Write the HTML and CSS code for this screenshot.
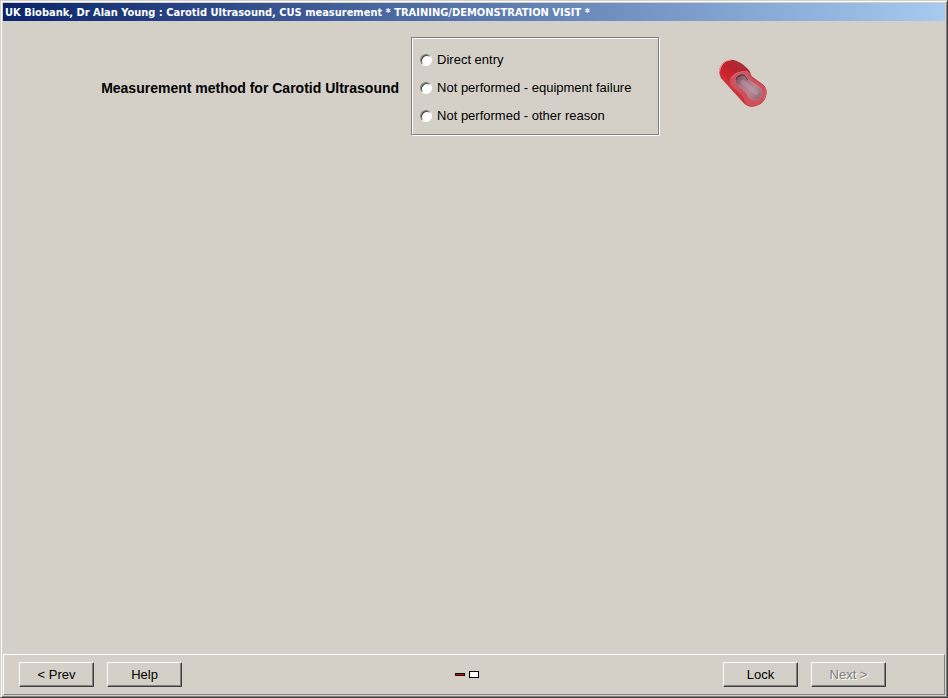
FILE: index.html
```html
<!DOCTYPE html>
<html lang="en">

<head>
    <meta charset="UTF-8">
    <meta name="viewport" content="width=device-width, initial-scale=1.0">
    <title>UK Biobank, Dr Alan Young : Carotid Ultrasound</title>
    <link rel="stylesheet" href="styles.css">
</head>

<body>
    <div class="window">
        <header class="title-bar">
            <h1>UK Biobank, Dr Alan Young : Carotid Ultrasound, CUS measurement * TRAINING/DEMONSTRATION VISIT *</h1>
        </header>

        <main class="content">
            <div class="question" id="question">Measurement method for Carotid Ultrasound</div>
            <div class="options" role="radiogroup" aria-labelledby="question">
                <label class="option"><input type="radio" name="method" value="direct">Direct entry</label>
                <label class="option"><input type="radio" name="method" value="equipment">Not performed - equipment failure</label>
                <label class="option"><input type="radio" name="method" value="other">Not performed - other reason</label>
            </div>
            <svg class="artery" width="50" height="50" viewBox="15 15 150 150" aria-hidden="true">
                <defs>
                    <linearGradient id="tube" x1="85" y1="28" x2="36" y2="85" gradientUnits="userSpaceOnUse">
                        <stop offset="0" stop-color="#a8303a"/>
                        <stop offset="0.4" stop-color="#b8242e"/>
                        <stop offset="0.75" stop-color="#cf222d"/>
                        <stop offset="1" stop-color="#cc343d"/>
                    </linearGradient>
                    <linearGradient id="lumen" x1="68" y1="65" x2="138" y2="132" gradientUnits="userSpaceOnUse">
                        <stop offset="0" stop-color="#75444f"/>
                        <stop offset="0.3" stop-color="#a37683"/>
                        <stop offset="0.65" stop-color="#b58a97"/>
                        <stop offset="1" stop-color="#946875"/>
                    </linearGradient>
                </defs>
                <!-- outer wall -->
                <path d="M16 56C14 36 30 17 52 17C70 17 92 32 107 51L113 67L148 92C157 100 160 112 156 126C151 147 130 159 110 158C100 157 94 153 86 144L20 71Z" fill="url(#tube)"/>
                <path d="M17 53C18 33 33 18 51 18" fill="none" stroke="#e6a9ab" stroke-width="3"/>
                <!-- cut face -->
                <path d="M48 76C52 60 78 48 101 53C109 56 109 63 113 69L148 94C160 105 160 122 150 139C139 154 116 160 103 154C90 147 91 134 84 124L58 102C50 94 46 86 48 76Z" fill="#cf505b"/>
                <path d="M54 72C62 57 83 50 101 54" fill="none" stroke="#df7b82" stroke-width="2"/>
                <path d="M149 97C159 107 157 121 149 136" fill="none" stroke="#dc727a" stroke-width="2"/>
                <!-- hollow inside -->
                <path d="M64 75C65 63 80 57 92 61C102 65 99 73 106 78L137 99C147 107 148 119 141 131C135 140 117 141 107 133C100 127 102 121 95 115L73 97C66 91 62 84 64 75Z" fill="url(#lumen)" stroke="#d27783" stroke-width="2"/>
                <path d="M86 84L126 116" fill="none" stroke="#c8a2ae" stroke-width="14" stroke-linecap="round" opacity="0.35"/>
                <path d="M66 77C68 66 83 61 91 64C96 67 96 73 101 78" fill="none" stroke="#532c38" stroke-width="3"/>
            </svg>
        </main>

        <footer class="button-bar">
            <div class="button-group">
                <button type="button" class="button">&lt; Prev</button>
                <button type="button" class="button">Help</button>
            </div>
            <div class="progress" role="img" aria-label="Page 1 of 2">
                <span class="step-current"></span>
                <span class="step"></span>
            </div>
            <div class="button-group button-group-right">
                <button type="button" class="button">Lock</button>
                <button type="button" class="button" disabled>Next &gt;</button>
            </div>
        </footer>
    </div>
</body>
</html>
```
FILE: styles.css
```css
html, body {
    height: 100%;
    margin: 0;
    background-color: #d4d0c8;
    font-family: "Liberation Sans", Arial, sans-serif;
    font-size: 13px;
}

.window {
    display: flex;
    flex-direction: column;
    min-height: 100vh;
    padding: 2px 1px 1px 2px;
    border: 1px solid #d4d0c8;
    border-right-color: #404040;
    border-bottom-color: #404040;
    box-shadow: inset 1px 1px 0 #ffffff, inset -1px -1px 0 #808080;
    box-sizing: border-box;
}

.title-bar {
    margin-right: 1px;
    padding: 1px 2px 0;
    background: linear-gradient(to right, #0a246a, #a6caf0);
}

.title-bar h1 {
    margin: 0;
    color: #ffffff;
    font-family: "DejaVu Sans Condensed", Tahoma, sans-serif;
    font-size: 11px;
    line-height: 17px;
}

.content {
    display: grid;
    grid-template-columns: 42% 248px 1fr;
    flex-grow: 1;
    align-content: start;
    align-items: start;
    column-gap: 12px;
    padding-top: 16px;
}

/* lines up with the middle option */
.question {
    padding-top: 37px;
    font-size: 14px;
    font-weight: bold;
    line-height: 28px;
    text-align: right;
}

.options {
    display: flex;
    flex-direction: column;
    padding: 8px 8px 4px;
    border: 1px solid #808080;
    box-shadow: 1px 1px 0 #ffffff, inset 1px 1px 0 #ffffff;
}

.option {
    display: flex;
    align-items: center;
    gap: 5px;
    line-height: 28px;
}

.option input {
    width: 12px;
    height: 12px;
    margin: 0;
    appearance: none;
    border: 1px solid #808080;
    border-right-color: #ffffff;
    border-bottom-color: #ffffff;
    border-radius: 50%;
    background-color: #ffffff;
    box-shadow: inset 1px 1px 0 #404040;
}

.option input:checked {
    background-image: radial-gradient(#000000 2px, transparent 2px);
}

.artery {
    margin: 22px 0 0 48px;
}

.button-bar {
    display: grid;
    grid-template-columns: 1fr auto 1fr;
    align-items: center;
    margin: 0 1px 1px 0;
    padding: 7px 29px 7px 15px;
    border: 1px solid #ffffff;
    border-right-color: #808080;
    border-bottom-color: #808080;
}

.button-group {
    display: flex;
    gap: 13px;
}

.button-group-right {
    justify-content: flex-end;
    padding-right: 29px;
}

.button {
    width: 75px;
    height: 25px;
    padding: 0;
    border: 1px solid #ffffff;
    border-right-color: #404040;
    border-bottom-color: #404040;
    background-color: #d4d0c8;
    box-shadow: inset -1px -1px 0 #808080;
    color: #000000;
    font: inherit;
}

.button:disabled {
    color: #808080;
    text-shadow: 1px 1px 0 #ffffff;
}

.progress {
    display: flex;
    align-items: center;
    gap: 4px;
}

.step, .step-current {
    width: 8px;
    height: 5px;
    border: 1px solid #000000;
    background-color: #ffffff;
}

.step-current {
    height: 1px;
    background-color: #ff0000;
}
```
